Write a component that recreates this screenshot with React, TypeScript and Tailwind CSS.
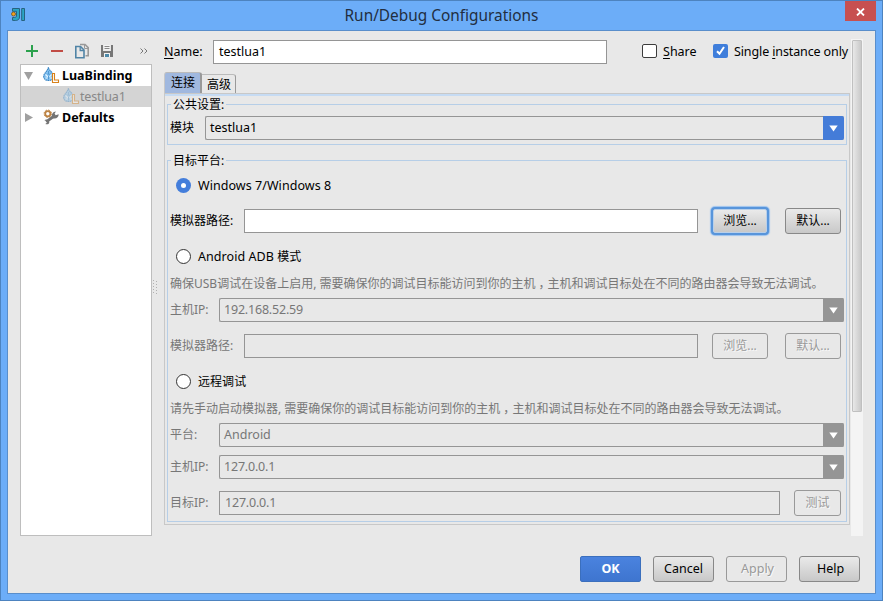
import type { ReactNode } from "react";

function Mnemonic({ letter, rest, before = "" }: { letter: string; rest: string; before?: string }) {
  return (
    <span className="whitespace-pre">
      {before}
      <span className="underline decoration-1 underline-offset-2">{letter}</span>
      {rest}
    </span>
  );
}

function AppIcon() {
  return (
    <svg width="16" height="16" viewBox="0 0 16 16" className="block">
      <path d="M2.5 1.5H9.5V10C9.5 13 7 14 2.5 13.3V10.5H4.5C6 10.5 6.5 10 6.5 8V4.3H2.5Z" fill="#2aa5c4" stroke="#27627f" />
      <path d="M11.7 1.5H14.5V13.5H11.7Z" fill="#2aa5c4" stroke="#27627f" />
      <circle cx="3.5" cy="7" r="2" fill="#f5a01c" stroke="#72571d" strokeWidth=".8" />
    </svg>
  );
}

function CopyIcon() {
  return (
    <svg width="16" height="16" viewBox="0 0 16 16" className="block">
      <path d="M6 1.5H11L14.2 4.7V12.8H11.5" fill="none" stroke="#999" strokeWidth="1.6" />
      <path d="M10.5 1V5.5H14" fill="none" stroke="#999" />
      <path d="M1.8 3.5H6.5L10 7V14.8H1.8Z" fill="#e8e8e8" stroke="#5084a6" strokeWidth="1.6" />
      <path d="M6.2 4V7.5H10" fill="none" stroke="#5084a6" strokeWidth="1.3" />
    </svg>
  );
}

function SaveIcon() {
  return (
    <svg width="14" height="14" viewBox="0 0 14 14" className="block">
      <path d="M1 1H3V7H11V1H13V13H10V9H4V13H1Z" fill="#777" />
      <path d="M4 1H10V6H4Z" fill="#f3f3f3" />
      <path d="M4.5 2.5H9.5M4.5 4.5H9.5" stroke="#888" />
      <path d="M4 9H10V13H4Z" fill="#f3f3f3" />
      <path d="M5 10H9V13H5Z" fill="#4c89a9" />
    </svg>
  );
}

function LuaIcon({ faded = false }: { faded?: boolean }) {
  return (
    <svg width="17" height="17" viewBox="0 0 17 17" className={faded ? "block opacity-40" : "block"}>
      <path d="M5.3 .8C6.3 3.5 10.6 6 10.6 9.5C10.6 12 8.6 13.5 5.7 13.5C2.8 13.5 .7 12 .7 9.3C.7 6.5 4.6 4 5.3 .8Z" fill="#86c4f2" stroke="#3b86c4" strokeWidth="1.1" strokeDasharray="1.6 .5" />
      <path d="M2.5 7.5L5 10M8.5 7.5L6.5 10M2.5 11H4.5M7 11H9" stroke="#e2f3ff" strokeWidth="1.2" />
      <path d="M5.5 4V7M4 6.5L5.5 8L7.5 6.5M5.5 9V12.5" fill="none" stroke="#4b94d0" strokeWidth=".9" />
      <path d="M9.5 6.5H11.5V13H15.5V15.5H9.5Z" fill="#fff" stroke="#d8821b" strokeWidth="1.1" />
    </svg>
  );
}

function DefaultsIcon() {
  return (
    <svg width="17" height="17" viewBox="0 0 17 17" className="block">
      <path d="M3.2 12.8L10.5 7.5" stroke="#747474" strokeWidth="2.8" />
      <path d="M9 8.5C8.3 5 10 3 13 2.6L11.6 4.6L12.6 6.2L15.7 5.2C15.7 8 13.5 10 10.6 9.4Z" fill="#747474" />
      <path d="M1.4 11.2C3.5 9.8 6.5 11 6.3 13.5C6 15.3 4 15.8 2.3 15L4.2 13.6L3.6 12.2Z" fill="#747474" />
      <circle cx="4.8" cy="4.7" r="2.6" fill="none" stroke="#bd8343" strokeWidth="1.8" />
      <circle cx="4.8" cy="4.7" r="3.7" fill="none" stroke="#bd8343" strokeWidth="1" strokeDasharray="1.6 1.3" />
    </svg>
  );
}

function Check({ checked = false }: { checked?: boolean }) {
  return (
    <span className={checked ? "block h-[14px] w-[15px] rounded-[2px] bg-[#3f7edb]" : "block h-[14px] w-[15px] rounded-[2px] border border-[#3c3c3c] bg-white"}>
      {checked && (
        <svg width="15" height="14" viewBox="0 0 15 14" className="block">
          <path d="M4 7.3L6.5 9.8L11 3" fill="none" stroke="#fff" strokeWidth="2" />
        </svg>
      )}
    </span>
  );
}

function Radio({ label, checked = false, cjk = "" }: { label: string; checked?: boolean; cjk?: string }) {
  return (
    <div className="flex h-[25px] items-center pl-2">
      <svg width="15" height="15" viewBox="0 0 15 15" className="block shrink-0">
        {checked ? (
          <>
            <circle cx="7.5" cy="7.5" r="7.5" fill="#447edb" />
            <circle cx="7.5" cy="7.5" r="2.5" fill="#fff" />
          </>
        ) : (
          <circle cx="7.5" cy="7.5" r="7" fill="#fff" stroke="#333" />
        )}
      </svg>
      <span className="ml-[7px] whitespace-pre tracking-[0.05px]">
        {label}
        <span className="text-[12px]">{cjk}</span>
      </span>
    </div>
  );
}

function Combo({ value, enabled = false, numeric = false }: { value: string; enabled?: boolean; numeric?: boolean }) {
  return (
    <div className={enabled ? "flex h-6 flex-1 rounded-[2px] border border-r-0 border-[#959595]" : "flex h-6 flex-1 rounded-[2px] border border-r-0 border-[#959595] text-[#777]"}>
      <span className={numeric ? "flex-1 pl-1 leading-[21px] tracking-[-0.2px]" : "flex-1 pl-1 leading-[21px]"}>{value}</span>
      <span className={enabled ? "-my-px flex w-[21px] items-center justify-center rounded-r-[2px] bg-[#447cd8]" : "-my-px flex w-[21px] items-center justify-center rounded-r-[2px] bg-[#959595]"}>
        <svg width="9" height="7" viewBox="0 0 9 7" className="block">
          <path d="M.3 .5H8.7L4.5 6.5Z" fill="#fff" />
        </svg>
      </span>
    </div>
  );
}

function Button({ children, className, disabled = false }: { children: ReactNode; className: string; disabled?: boolean }) {
  const look = disabled
    ? "border-[#999] text-[#999] [text-shadow:1px_1px_0_#f8f8f8]"
    : "border-[#888] bg-gradient-to-b from-[#eaeaea] to-[#c8c8c8] text-black";
  return <button className={`flex h-[26px] shrink-0 items-center justify-center rounded-[3px] border ${look} ${className}`}>{children}</button>;
}

function Group({ title, className, children }: { title: string; className: string; children: ReactNode }) {
  return (
    <section className={`relative border border-[#b6cee7] ${className}`}>
      <h2 className="absolute -top-[9px] left-[3px] h-[18px] bg-[#e8e8e8] px-[2px] text-[12px] leading-[17px]">{title}</h2>
      {children}
    </section>
  );
}

function Label({ children, className }: { children: ReactNode; className: string }) {
  return <span className={`shrink-0 whitespace-nowrap pl-[2px] text-[12px] ${className}`}>{children}</span>;
}

function Hint({ start, end }: { start: string; end: string }) {
  return (
    <p className="mt-[5px] h-5 whitespace-nowrap pl-[2px] text-[12px] leading-5 text-[#777]">
      {start}
      <span className="tracking-[3px]">机</span>
      <span className="tracking-[-3px]">，</span>
      {end}
    </p>
  );
}

export default function App() {
  return (
    <div className="flex h-[601px] w-[883px] flex-col overflow-hidden border border-[#4d83bf] bg-[#6cadf8] px-[6px] pb-[6px] font-['Noto_Sans','Noto_Sans_CJK_SC',sans-serif] text-[12.5px] leading-[18px] text-black">
      <header className="flex h-[29px] shrink-0 items-start">
        <div className="w-[31px] pl-[3px] pt-[6px]"><AppIcon /></div>
        <h1 className="flex-1 pt-[4px] text-center text-[15.4px] leading-[22px] text-[#222e40]">Run/Debug Configurations</h1>
        <button className="flex h-5 w-[31px] items-center justify-center bg-[#c75050] pt-px">
          <svg width="9" height="8" viewBox="0 0 9 8"><path d="M1 .5L8 7.5M8 .5L1 7.5" stroke="#fff" strokeWidth="1.8" /></svg>
        </button>
      </header>

      <main className="flex min-h-0 flex-1 flex-col border border-[#598ecb] bg-[#e8e8e8]">
        <div className="flex h-[505px]">
          <aside className="ml-3 flex w-[132px] flex-col">
            <div className="flex h-[33px] items-center pt-[7px]">
              <svg width="12" height="12" viewBox="0 0 12 12" className="ml-[6px]"><path d="M6 0V12M0 6H12" stroke="#2ba14d" strokeWidth="2" /></svg>
              <svg width="12" height="12" viewBox="0 0 12 12" className="ml-[13px]"><path d="M0 6H12" stroke="#c14c45" strokeWidth="2" /></svg>
              <div className="ml-[11px]"><CopyIcon /></div>
              <div className="ml-[10px]"><SaveIcon /></div>
              <svg width="8" height="6" viewBox="0 0 8 6" className="ml-[26px]"><path d="M.5 .5L3 3L.5 5.5M4.5 .5L7 3L4.5 5.5" fill="none" stroke="#777" /></svg>
            </div>
            <div className="h-[472px] border border-[#bebebe] bg-white">
              <div className="flex h-[21px] items-center pl-[3px] font-bold">
                <svg width="9" height="8"><path d="M0 0H9L4.5 8Z" fill="#a0a0a0" /></svg>
                <span className="ml-[10px]"><LuaIcon /></span>
                <span className="ml-[2px] mt-px">LuaBinding</span>
              </div>
              <div className="flex h-[21px] items-center bg-[#d4d4d4] pl-[42px] text-[#888]">
                <LuaIcon faded />
                <span className="mt-px tracking-[-0.2px]">testlua1</span>
              </div>
              <div className="flex h-[21px] items-center pl-1 font-bold">
                <svg width="8" height="9"><path d="M0 0V9L8 4.5Z" fill="#a0a0a0" /></svg>
                <span className="ml-[10px]"><DefaultsIcon /></span>
                <span className="ml-[2px] mt-px">Defaults</span>
              </div>
            </div>
          </aside>

          <div className="flex w-3 items-center pt-[8px]">
            <svg width="6" height="15" viewBox="0 0 6 15"><path d="M1.5 0V15M4.5 1V14" stroke="#b0b0b0" strokeDasharray="1 2" /></svg>
          </div>

          <div className="flex w-[687px] flex-col pt-[9px]">
            <div className="flex h-6 items-center whitespace-nowrap">
              <label className="w-[49px] shrink-0"><Mnemonic letter="N" rest="ame:" /></label>
              <div className="h-6 w-[394px] shrink-0 border border-[#959595] bg-white pl-[5px] leading-[21px]">testlua1</div>
              <span className="mb-[2px] ml-[35px] shrink-0"><Check /></span>
              <label className="ml-[6px] w-[50px] shrink-0"><Mnemonic letter="S" rest="hare" /></label>
              <span className="mb-[2px] shrink-0"><Check checked /></span>
              <label className="ml-[6px] shrink-0 tracking-[-0.12px]"><Mnemonic before="Single " letter="i" rest="nstance only" /></label>
            </div>

            <div className="mt-2 flex h-[21px] items-end text-[12px]">
              <div className="h-[21px] w-[38px] rounded-t-[3px] border-l border-r-2 border-t border-[#999] border-l-[#c8c8c8] border-t-[#bbb] bg-[#a0b8df] pl-px text-center leading-[20px]">连接</div>
              <div className="h-[19px] w-[34px] rounded-tr-[3px] border-r border-t border-[#999] border-t-[#bbb] pl-px text-center leading-[19px]">高级</div>
            </div>
            <div className="h-[432px] w-[686px] border border-[#c8c8c8]">
              <div className="h-[2px] bg-[#c6dbf3]" />
              <div className="px-[2px] pt-2">
                <Group title="公共设置:" className="h-[41px]">
                  <div className="mt-[11px] flex items-center pr-[2px]">
                    <Label className="w-[37px]">模块</Label>
                    <Combo value="testlua1" enabled />
                  </div>
                </Group>

                <Group title="目标平台:" className="mt-[15px] h-[362px] pt-3">
                  <Radio label="Windows 7/Windows 8" checked />
                  <div className="mt-2 flex h-[30px] items-center">
                    <Label className="w-[76px]">模拟器路径:</Label>
                    <div className="h-6 w-[454px] border border-[#959595] bg-white" />
                    <div className="ml-[13px] mr-[16px] rounded-[4px] bg-[#5895db] p-[2px] shadow-[0_0_1px_1px_#9cc3ef]">
                      <Button className="h-[24px]! w-[54px] rounded-[2px]! border-[#b9d0ea]! text-[12px]">浏览...</Button>
                    </div>
                    <Button className="w-14 text-[12px]">默认...</Button>
                  </div>
                  <div className="mt-2"><Radio label="Android ADB " cjk="模式" /></div>
                  <Hint start="确保USB调试在设备上启用, 需要确保你的调试目标能访问到你的主" end="主机和调试目标处在不同的路由器会导致无法调试。" />
                  <div className="mt-1 flex items-center pr-[2px] text-[#777]">
                    <Label className="w-[51px]">主机IP:</Label>
                    <Combo value="192.168.52.59" numeric />
                  </div>
                  <div className="mt-[11px] flex h-[26px] items-center text-[#777]">
                    <Label className="w-[76px]">模拟器路径:</Label>
                    <div className="h-6 w-[454px] border border-[#959595]" />
                    <Button disabled className="ml-[14px] w-14 text-[12px]">浏览...</Button>
                    <Button disabled className="ml-[17px] w-14 text-[12px]">默认...</Button>
                  </div>
                  <div className="mt-[10px]"><Radio label="" cjk="远程调试" /></div>
                  <Hint start="请先手动启动模拟器, 需要确保你的调试目标能访问到你的主" end="主机和调试目标处在不同的路由器会导致无法调试。" />
                  <div className="mt-1 flex items-center pr-[2px] text-[#777]">
                    <Label className="w-[51px]">平台:</Label>
                    <Combo value="Android" />
                  </div>
                  <div className="mt-2 flex items-center pr-[2px] text-[#777]">
                    <Label className="w-[51px]">主机IP:</Label>
                    <Combo value="127.0.0.1" numeric />
                  </div>
                  <div className="mt-[11px] flex h-[26px] items-center text-[#777]">
                    <Label className="w-[51px]">目标IP:</Label>
                    <div className="h-6 w-[561px] border border-[#959595] pl-[5px] leading-[22px] tracking-[-0.2px]">127.0.0.1</div>
                    <Button disabled className="ml-[14px] w-[47px] text-[12px]">测试</Button>
                  </div>
                </Group>
              </div>
            </div>
          </div>

          <div className="mt-2 h-[497px] w-3 bg-[#f4f4f4] px-px pt-px">
            <div className="h-[372px] rounded-[1px] border border-[#c0c0c0] bg-gradient-to-r from-[#e8e8e8] to-[#c9c9c9]" />
          </div>
        </div>

        <footer className="mt-5 flex justify-end gap-3 pr-[15px]">
          <button className="h-[26px] w-[61px] rounded-[2px] border border-[#3b6fbd] bg-gradient-to-b from-[#4a83df] to-[#3e75cf] pb-px font-bold text-white">OK</button>
          <Button className="w-[61px] pb-px">Cancel</Button>
          <Button disabled className="w-[61px] pb-px pl-[2px]">Apply</Button>
          <Button className="w-[61px] pb-px pl-[2px]">Help</Button>
        </footer>
      </main>
    </div>
  );
}
